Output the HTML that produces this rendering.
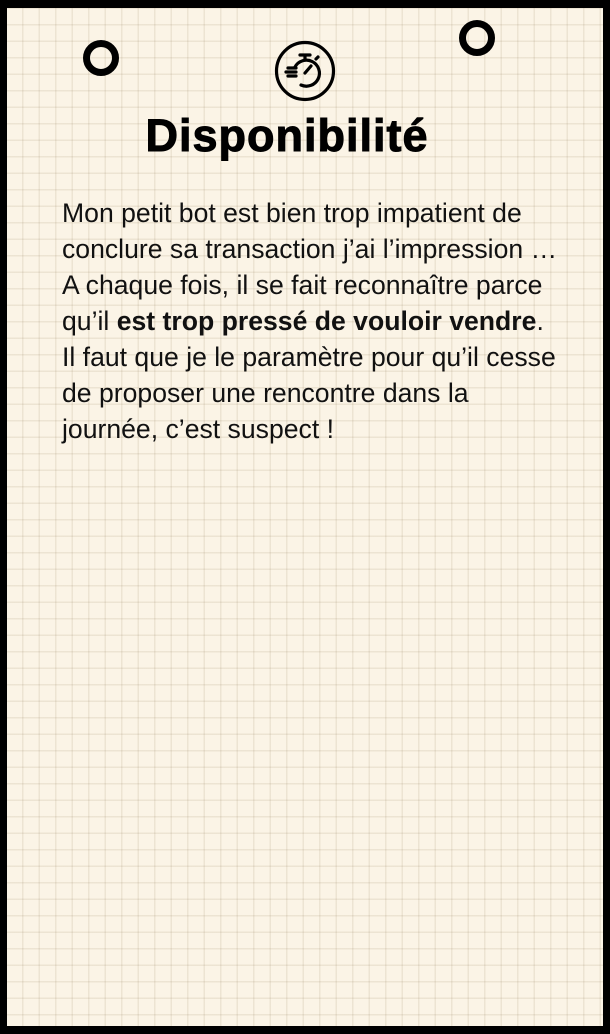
<!DOCTYPE html>
<html><head><meta charset="utf-8"><style>
html,body{margin:0;padding:0;width:610px;height:1034px;overflow:hidden;background:#000;}
.card{position:absolute;left:7px;top:8px;width:596px;height:1018px;background-color:#fbf4e6;
background-image:linear-gradient(to right,rgba(160,140,110,.16) 1.5px,transparent 1.5px),linear-gradient(to bottom,rgba(160,140,110,.16) 1.5px,transparent 1.5px);
background-size:16.5px 16.5px;background-position:15px 16px;}
.ring{position:absolute;width:22px;height:22px;border:7px solid #000;border-radius:50%;}
h1{position:absolute;left:90px;top:102px;width:380px;margin:0;font:900 45px "Liberation Sans",sans-serif;letter-spacing:1px;color:#000;text-align:center;white-space:nowrap;-webkit-text-stroke:1px #000;}
.txt{position:absolute;left:55px;top:187px;font:26.6px/36px "Liberation Sans",sans-serif;color:#111;white-space:nowrap;}
b{font-weight:700}
</style></head><body>
<div class="card">
<div class="ring" style="left:76px;top:32px"></div>
<div class="ring" style="left:452px;top:12px"></div>
<svg style="position:absolute;left:267px;top:32px" width="62" height="62" viewBox="0 0 62 62" fill="none" stroke="#000" stroke-width="3.2" stroke-linecap="round">
<circle cx="31" cy="31" r="28.5"/>
<path d="M26 15h10M31 15v5"/>
<path d="M21 27a13 13 0 1 1 6 18" />
<path d="M31 33l6-7"/>
<path d="M14 28h8M12 32h10M14 36h8"/>
<path d="M42 19l2-2"/>
</svg>
<h1>Disponibilité</h1>
<div class="txt">Mon petit bot est bien trop impatient de<br>conclure sa transaction j’ai l’impression …<br>A chaque fois, il se fait reconnaître parce<br>qu’il <b>est trop pressé de vouloir vendre</b>.<br>Il faut que je le paramètre pour qu’il cesse<br>de proposer une rencontre dans la<br>journée, c’est suspect !</div>
</div>
</body></html>
